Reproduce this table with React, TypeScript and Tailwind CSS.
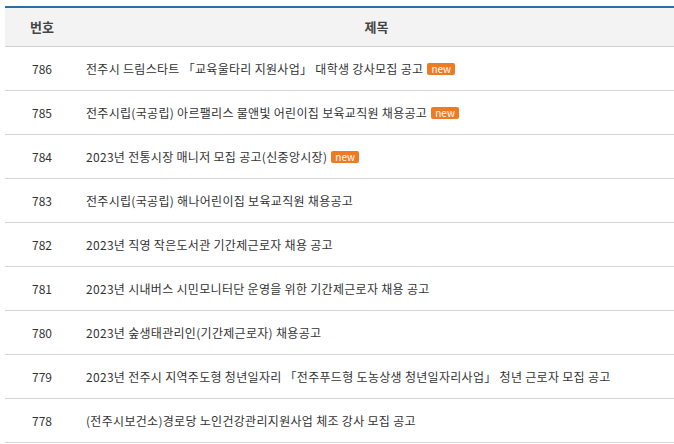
import React from 'react';

interface Notice {
  no: number;
  title: string;
  isNew?: boolean;
}

const notices: Notice[] = [
  { no: 786, title: '전주시 드림스타트 「교육울타리 지원사업」 대학생 강사모집 공고', isNew: true },
  { no: 785, title: '전주시립(국공립) 아르팰리스 물앤빛 어린이집 보육교직원 채용공고', isNew: true },
  { no: 784, title: '2023년 전통시장 매니저 모집 공고(신중앙시장)', isNew: true },
  { no: 783, title: '전주시립(국공립) 해나어린이집 보육교직원 채용공고' },
  { no: 782, title: '2023년 직영 작은도서관 기간제근로자 채용 공고' },
  { no: 781, title: '2023년 시내버스 시민모니터단 운영을 위한 기간제근로자 채용 공고' },
  { no: 780, title: '2023년 숲생태관리인(기간제근로자) 채용공고' },
  { no: 779, title: '2023년 전주시 지역주도형 청년일자리 「전주푸드형 도농상생 청년일자리사업」 청년 근로자 모집 공고' },
  { no: 778, title: '(전주시보건소)경로당 노인건강관리지원사업 체조 강사 모집 공고' },
];

const NewBadge: React.FC = () => (
  <span className="ml-1 inline-flex h-[12px] items-center rounded-[2px] bg-[#ee7a22] px-[4px] text-[10px] leading-none tracking-normal text-white">
    new
  </span>
);

const NoticeRow: React.FC<{ item: Notice }> = ({ item }) => (
  <div className="flex h-[44px] items-center border-b border-[#d4d4d4]">
    <div className="w-[74px] text-center">{item.no}</div>
    <div className="flex flex-1 items-center pl-[7px] tracking-[0.3px]">
      <span>{item.title}</span>
      {item.isNew && <NewBadge />}
    </div>
  </div>
);

export default function App() {
  return (
    <div
      className="h-[444px] w-[674px] overflow-hidden bg-white pt-[6px] pl-[5px] text-[12px] text-[#333]"
      style={{ fontFamily: '"Noto Sans CJK KR", "Noto Sans", sans-serif' }}
    >
      <div className="border-t-2 border-[#2b6f9c]">
        <div className="flex h-[39px] items-center border-b border-[#cfcfcf] bg-[#f3f3f3] text-[13px] font-bold text-[#444]">
          <div className="w-[74px] text-center">번호</div>
          <div className="flex-1 text-center">제목</div>
        </div>
        {notices.map((n) => (
          <NoticeRow key={n.no} item={n} />
        ))}
      </div>
    </div>
  );
}
